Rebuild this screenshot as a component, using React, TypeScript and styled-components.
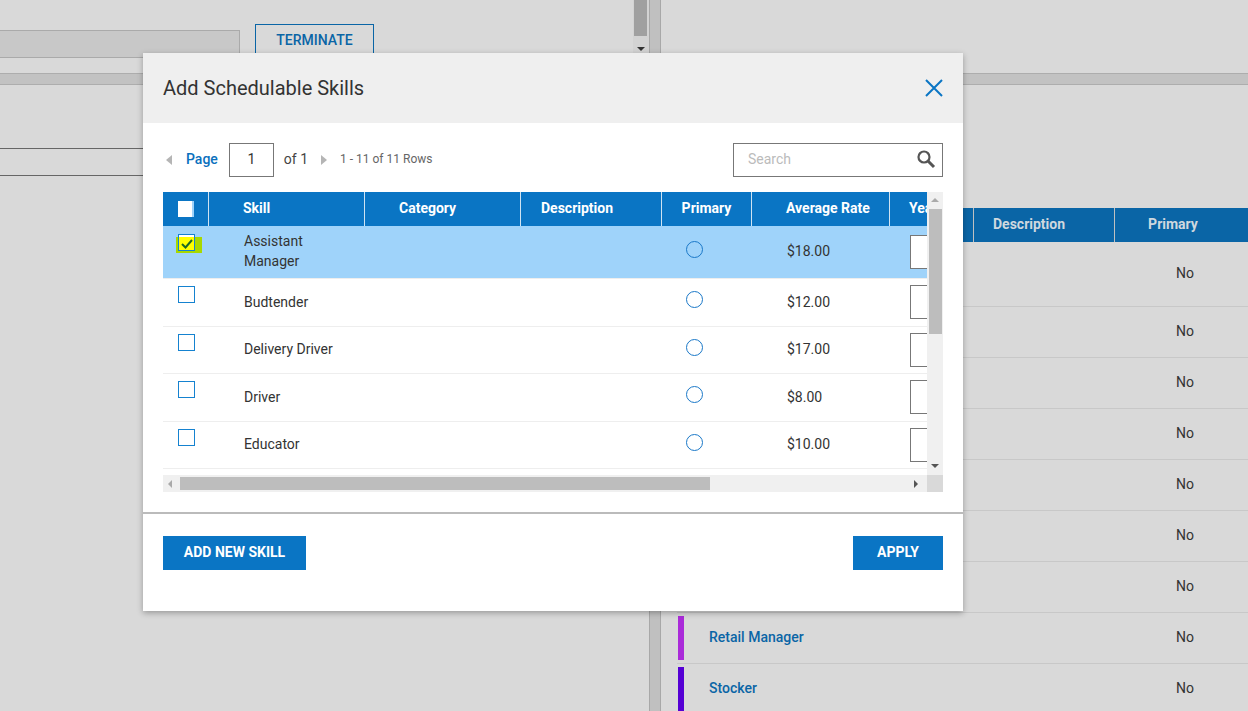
import React from "react";
import styled, { createGlobalStyle } from "styled-components";

const Global = createGlobalStyle`
  html, body { margin: 0; padding: 0; background: #d9d9d9; }
  body { font-family: Roboto, "Liberation Sans", sans-serif; font-size: 14px; color: #333; overflow: hidden; }
  * { box-sizing: border-box; }
`;

const Page = styled.div`
  position: relative;
  display: flex;
  width: 1248px;
  height: 711px;
  overflow: hidden;
  background: #d9d9d9;
`;

const LeftPane = styled.div`
  width: 633px;
  flex: none;
  padding-top: 24px;
`;

const ActionRow = styled.div`
  display: flex;
  align-items: flex-start;
  gap: 15px;
  height: 49px;
`;

const ReadonlyField = styled.div`
  width: 240px;
  height: 28px;
  margin-top: 6px;
  background: #c8c8c8;
  border: 1px solid #aaa;
  border-left: none;
`;

const OutlineButton = styled.div`
  width: 119px;
  height: 40px;
  border: 1px solid #0a65a6;
  color: #0a65a6;
  font-weight: 500;
  font-size: 14px;
  line-height: 30px;
  text-align: center;
`;

const SectionBand = styled.div`
  height: 12px;
  background: #c2c2c2;
  border-top: 1px solid #adadad;
  border-bottom: 1px solid #adadad;
`;

const LeftField = styled.div`
  height: 28px;
  margin-top: 63px;
  border-top: 1px solid #666;
  border-bottom: 1px solid #666;
`;

const PaneScrollbar = styled.div`
  position: relative;
  width: 16px;
  height: 60px;
  flex: none;
  background: #d3d3d3;
`;

const PaneThumb = styled.div`
  width: 13px;
  height: 36px;
  margin-left: 1px;
  background: #a0a0a0;
`;

const PaneArrow = styled.div`
  position: absolute;
  top: 47px;
  left: 4px;
  width: 0;
  height: 0;
  border-left: 4px solid transparent;
  border-right: 4px solid transparent;
  border-top: 4px solid #333;
`;

const Splitter = styled.div`
  width: 12px;
  flex: none;
  background: #c0c0c0;
  border-left: 1px solid #a8a8a8;
  border-right: 1px solid #a8a8a8;
`;

const RightPane = styled.div`
  flex: 1;
  min-width: 0;
  padding-top: 73px;
`;

const RightTable = styled.div`
  margin: 123px 0 0 16px;
`;

const BgHeader = styled.div`
  display: grid;
  grid-template-columns: 297px 141px 1fr;
  height: 34px;
  background: #0a65a6;
  color: #cfd8df;
  font-weight: 700;
  font-size: 14px;
  line-height: 33px;
`;

const BgHeadCell = styled.div<{ $center?: boolean }>`
  border-right: 1px solid #c0c0c0;
  text-align: ${(p) => (p.$center ? "center" : "left")};
  padding-left: ${(p) => (p.$center ? "0" : "19px")};
  &:last-child { border-right: none; }
  width: ${(p) => (p.$center ? "116px" : "auto")};
`;

const BgRow = styled.div<{ $h: number }>`
  display: flex;
  align-items: center;
  height: ${(p) => p.$h}px;
  padding: 3px 0 3px 1px;
  border-bottom: 1px solid #c8c8c8;
  color: #333;
`;

const ColorTag = styled.div<{ $color: string }>`
  width: 6px;
  height: 100%;
  background: ${(p) => p.$color};
  flex: none;
`;

const SkillLink = styled.div`
  width: 0;
  flex: 1;
  padding-left: 25px;
  padding-bottom: 3px;
  color: #0a65a6;
  font-weight: 500;
`;

const NoCell = styled.div`
  width: 72px;
  flex: none;
  padding-bottom: 3px;
`;

const Modal = styled.div`
  position: absolute;
  left: 143px;
  top: 53px;
  width: 820px;
  height: 558px;
  background: #fff;
  box-shadow: 0 2px 6px rgba(0, 0, 0, 0.3);
`;

const ModalHeader = styled.div`
  display: flex;
  align-items: center;
  justify-content: space-between;
  height: 70px;
  padding: 0 20px;
  background: #efefef;
`;

const Title = styled.h2`
  margin: 0;
  font-size: 20px;
  font-weight: 400;
  color: #333;
`;

const CloseButton = styled.button`
  display: flex;
  width: 18px;
  height: 18px;
  padding: 0;
  border: none;
  background: none;
`;

const Toolbar = styled.div`
  display: flex;
  align-items: center;
  height: 34px;
  margin: 20px 20px 15px;
`;

const Triangle = styled.span<{ $dir: "left" | "right"; $mx: string }>`
  width: 0;
  height: 0;
  margin: ${(p) => p.$mx};
  border-top: 5px solid transparent;
  border-bottom: 5px solid transparent;
  ${(p) => (p.$dir === "left" ? "border-right: 6px solid #b5b5b5;" : "border-left: 6px solid #b5b5b5;")}
`;

const PageLabel = styled.span`
  color: #0a70bd;
  font-weight: 500;
  margin: 0 11px 2px 0;
`;

const PageInput = styled.div`
  width: 45px;
  height: 34px;
  border: 1px solid #777;
  text-align: center;
  line-height: 30px;
  color: #333;
  margin-right: 10px;
`;

const OfText = styled.span`
  color: #444;
  margin-bottom: 2px;
`;

const RowsText = styled.span`
  color: #666;
  font-size: 12px;
  margin-bottom: 2px;
`;

const SearchBox = styled.div`
  display: flex;
  align-items: center;
  justify-content: space-between;
  width: 210px;
  height: 34px;
  margin-left: auto;
  padding: 0 6px 2px 14px;
  border: 1px solid #777;
  color: #bbb;
`;

const Grid = styled.div`
  display: grid;
  grid-template-columns: 764px 16px;
  grid-template-rows: 283px 17px;
  margin: 0 20px;
`;

const Viewport = styled.div`
  overflow: hidden;
`;

const TableInner = styled.div`
  width: 900px;
`;

const HeadRow = styled.div`
  display: grid;
  grid-template-columns: 46px 156px 156px 141px 90px 138px 173px;
  height: 34px;
  background: #0a75c4;
  color: #fff;
  font-weight: 700;
  line-height: 32px;
`;

const HeadCell = styled.div<{ $center?: boolean; $pad?: number }>`
  border-right: 1px solid #cfe3f2;
  text-align: ${(p) => (p.$center ? "center" : "left")};
  padding-left: ${(p) => p.$pad ?? 0}px;
  &:last-child { border-right: none; }
`;

const HeadCheck = styled.div`
  width: 16px;
  height: 16px;
  margin: 9px 0 0 15px;
  background: #fff;
  border-right: 2px solid #9fd3fa;
`;

const Row = styled.div<{ $h: number; $selected?: boolean }>`
  display: grid;
  grid-template-columns: 46px 156px 156px 141px 90px 138px 173px;
  height: ${(p) => p.$h}px;
  background: ${(p) => (p.$selected ? "#9fd3fa" : "#fff")};
  border-bottom: 1px solid #eee;
  color: #333;
`;

const CheckCell = styled.div<{ $selected?: boolean }>`
  position: relative;
  padding: ${(p) => (p.$selected ? "8px" : "7px")} 0 0 15px;
`;

const Checkbox = styled.div`
  width: 17px;
  height: 17px;
  background: #fff;
  border: 1.5px solid #1582d0;
`;

const Highlight = styled.div`
  position: absolute;
  left: 13px;
  top: 11px;
  width: 26px;
  height: 16px;
  background: #a8d800;
`;

const HighlightBox = styled.div`
  position: absolute;
  left: 15px;
  top: 11px;
  width: 17px;
  height: 14px;
  background: #ffff00;
  border: 1.5px solid #1582d0;
  border-top: none;
  display: flex;
  align-items: center;
  justify-content: center;
`;

const SkillCell = styled.div<{ $top: number }>`
  padding: ${(p) => p.$top}px 0 0 35px;
  line-height: 20px;
`;

const RadioCell = styled.div<{ $selected?: boolean }>`
  padding: ${(p) => (p.$selected ? "15px" : "12px")} 0 0 24px;
`;

const Radio = styled.div`
  width: 17px;
  height: 17px;
  background: transparent;
  border: 1.75px solid #1a78c8;
  border-radius: 50%;
`;

const RateCell = styled.div<{ $top: number }>`
  padding: ${(p) => p.$top}px 0 0 35px;
  line-height: 20px;
`;

const YearsCell = styled.div<{ $selected?: boolean }>`
  padding: ${(p) => (p.$selected ? "9px" : "6px")} 0 0 20px;
`;

const YearsInput = styled.div`
  width: 60px;
  height: 34px;
  background: #fff;
  border: 1px solid #777;
`;

const VScroll = styled.div`
  display: flex;
  flex-direction: column;
  align-items: center;
  background: #f0f0f0;
  padding-top: 6px;
`;

const HScroll = styled.div`
  display: flex;
  align-items: center;
  background: #f0f0f0;
  padding-left: 5px;
`;

const ScrollArrow = styled.span<{ $dir: "up" | "down" | "left" | "right"; $dark?: boolean }>`
  width: 0;
  height: 0;
  flex: none;
  ${(p) => {
    const c = p.$dark ? "#555" : "#aaa";
    if (p.$dir === "up") return `border-left:4px solid transparent;border-right:4px solid transparent;border-bottom:4px solid ${c};`;
    if (p.$dir === "down") return `border-left:4px solid transparent;border-right:4px solid transparent;border-top:4px solid ${c};`;
    if (p.$dir === "left") return `border-top:4px solid transparent;border-bottom:4px solid transparent;border-right:4px solid ${c};`;
    return `border-top:4px solid transparent;border-bottom:4px solid transparent;border-left:4px solid ${c};`;
  }}
`;

const VThumb = styled.div`
  width: 13px;
  height: 125px;
  margin: 7px 0 auto;
  background: #bdbdbd;
`;

const HThumb = styled.div`
  width: 530px;
  height: 13px;
  margin: 0 auto 0 8px;
  background: #bdbdbd;
`;

const ArrowEnd = styled.div`
  display: flex;
  margin-bottom: 7px;
`;

const ArrowEndH = styled.div`
  display: flex;
  margin-right: 9px;
`;

const Corner = styled.div`
  background: #d9d9d9;
`;

const FooterRule = styled.div`
  height: 2px;
  margin-top: 20px;
  background: #bbb;
`;

const Footer = styled.div`
  display: flex;
  justify-content: space-between;
  padding: 22px 20px 0;
`;

const PrimaryButton = styled.button<{ $w: number }>`
  width: ${(p) => p.$w}px;
  height: 34px;
  padding: 0 0 2px;
  border: none;
  background: #0a75c4;
  color: #fff;
  font: 700 14px Roboto, "Liberation Sans", sans-serif;
`;

type Skill = {
  name: React.ReactNode;
  rate: string;
  h: number;
  nameTop: number;
  rateTop: number;
  selected?: boolean;
};

const skills: Skill[] = [
  { name: <>Assistant<br />Manager</>, rate: "$18.00", h: 53, nameTop: 5, rateTop: 15, selected: true },
  { name: "Budtender", rate: "$12.00", h: 48, nameTop: 13, rateTop: 13 },
  { name: "Delivery Driver", rate: "$17.00", h: 47, nameTop: 12, rateTop: 12 },
  { name: "Driver", rate: "$8.00", h: 48, nameTop: 13, rateTop: 13 },
  { name: "Educator", rate: "$10.00", h: 47, nameTop: 12, rateTop: 12 },
];

const bgRows: { h: number; name?: string; color?: string }[] = [
  { h: 65 }, { h: 51 }, { h: 51 }, { h: 51 }, { h: 51 }, { h: 51 }, { h: 51 },
  { h: 51, name: "Retail Manager", color: "#aa2bd9" },
  { h: 51, name: "Stocker", color: "#5500d4" },
];

export default function App() {
  return (
    <Page>
      <Global />
      <LeftPane>
        <ActionRow>
          <ReadonlyField />
          <OutlineButton>TERMINATE</OutlineButton>
        </ActionRow>
        <SectionBand />
        <LeftField />
      </LeftPane>
      <PaneScrollbar>
        <PaneThumb />
        <PaneArrow />
      </PaneScrollbar>
      <Splitter />
      <RightPane>
        <SectionBand />
        <RightTable>
          <BgHeader>
            <BgHeadCell />
            <BgHeadCell>Description</BgHeadCell>
            <BgHeadCell $center>Primary</BgHeadCell>
          </BgHeader>
          {bgRows.map((r, i) => (
            <BgRow key={i} $h={r.h}>
              {r.color ? <ColorTag $color={r.color} /> : null}
              <SkillLink>{r.name}</SkillLink>
              <NoCell>No</NoCell>
            </BgRow>
          ))}
        </RightTable>
      </RightPane>

      <Modal>
        <ModalHeader>
          <Title>Add Schedulable Skills</Title>
          <CloseButton aria-label="Close">
            <svg width="18" height="18" viewBox="0 0 18 18">
              <path d="M1 1 L17 17 M17 1 L1 17" stroke="#0a75c4" strokeWidth="2" fill="none" />
            </svg>
          </CloseButton>
        </ModalHeader>
        <Toolbar>
          <Triangle $dir="left" $mx="0 14px 0 3px" />
          <PageLabel>Page</PageLabel>
          <PageInput>1</PageInput>
          <OfText>of 1</OfText>
          <Triangle $dir="right" $mx="0 13px 0 13px" />
          <RowsText>1 - 11 of 11 Rows</RowsText>
          <SearchBox>
            Search
            <svg width="20" height="20" viewBox="0 0 20 20">
              <circle cx="8" cy="8" r="5.5" stroke="#555" strokeWidth="2.2" fill="none" />
              <path d="M12 12 L18 18" stroke="#555" strokeWidth="3" fill="none" />
            </svg>
          </SearchBox>
        </Toolbar>
        <Grid>
          <Viewport>
            <TableInner>
              <HeadRow>
                <HeadCell><HeadCheck /></HeadCell>
                <HeadCell $pad={34}>Skill</HeadCell>
                <HeadCell $pad={34}>Category</HeadCell>
                <HeadCell $pad={20}>Description</HeadCell>
                <HeadCell $center>Primary</HeadCell>
                <HeadCell $pad={34}>Average Rate</HeadCell>
                <HeadCell $pad={19}>Years</HeadCell>
              </HeadRow>
              {skills.map((s, i) => (
                <Row key={i} $h={s.h} $selected={s.selected}>
                  <CheckCell $selected={s.selected}>
                    <Checkbox />
                    {s.selected ? (
                      <>
                        <Highlight />
                        <HighlightBox>
                          <svg width="12" height="10" viewBox="0 0 12 10">
                            <path d="M1 5 L4.5 8.5 L11 1" stroke="#1d6b24" strokeWidth="2" fill="none" />
                          </svg>
                        </HighlightBox>
                      </>
                    ) : null}
                  </CheckCell>
                  <SkillCell $top={s.nameTop}>{s.name}</SkillCell>
                  <div />
                  <div />
                  <RadioCell $selected={s.selected}><Radio /></RadioCell>
                  <RateCell $top={s.rateTop}>{s.rate}</RateCell>
                  <YearsCell $selected={s.selected}><YearsInput /></YearsCell>
                </Row>
              ))}
            </TableInner>
          </Viewport>
          <VScroll>
            <ScrollArrow $dir="up" />
            <VThumb />
            <ArrowEnd><ScrollArrow $dir="down" $dark /></ArrowEnd>
          </VScroll>
          <HScroll>
            <ScrollArrow $dir="left" />
            <HThumb />
            <ArrowEndH><ScrollArrow $dir="right" $dark /></ArrowEndH>
          </HScroll>
          <Corner />
        </Grid>
        <FooterRule />
        <Footer>
          <PrimaryButton $w={143}>ADD NEW SKILL</PrimaryButton>
          <PrimaryButton $w={90}>APPLY</PrimaryButton>
        </Footer>
      </Modal>
    </Page>
  );
}
